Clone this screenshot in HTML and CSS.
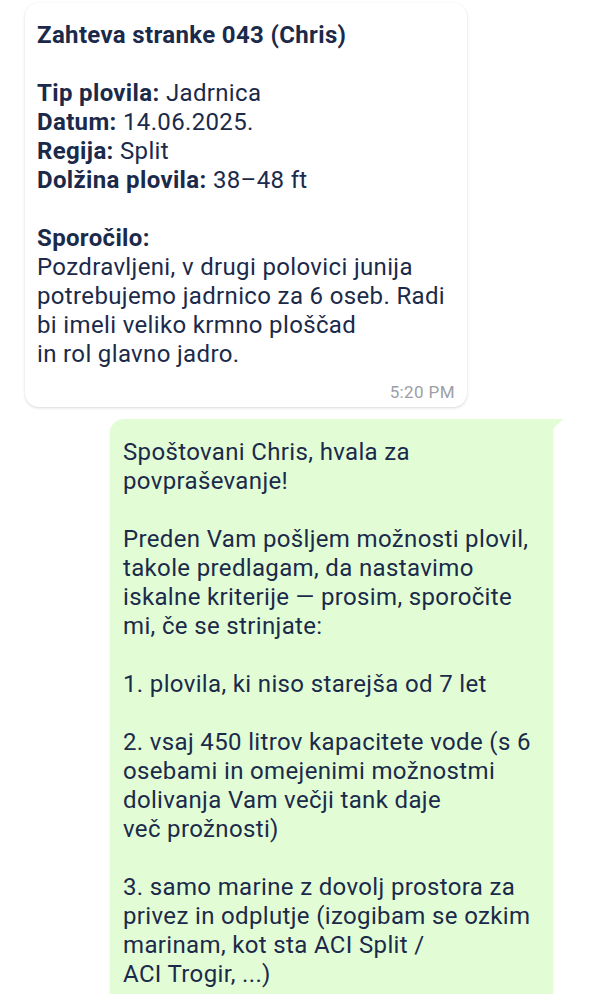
FILE: index.html
```html
<!DOCTYPE html>
<html lang="sl">
<head>
    <meta charset="UTF-8">
    <meta name="viewport" content="width=device-width, initial-scale=1.0">
    <title>Zahteva stranke 043</title>
    <link rel="stylesheet" href="styles.css">
</head>
<body>
    <div class="chat">
        <div class="bubble incoming">
            <p class="title">Zahteva stranke 043 (Chris)</p>
            <p>
                <b>Tip plovila:</b> Jadrnica<br>
                <b>Datum:</b> 14.06.2025.<br>
                <b>Regija:</b> Split<br>
                <b>Dolžina plovila:</b> 38–48 ft
            </p>
            <p class="last">
                <b>Sporočilo:</b><br>
                Pozdravljeni, v drugi polovici junija<br>
                potrebujemo jadrnico za 6 oseb. Radi<br>
                bi imeli veliko krmno ploščad<br>
                in rol glavno jadro.
            </p>
            <div class="time">5:20 PM</div>
        </div>

        <div class="bubble outgoing">
            <p>Spoštovani Chris, hvala za<br>povpraševanje!</p>
            <p>Preden Vam pošljem možnosti plovil,<br>
                takole predlagam, da nastavimo<br>
                iskalne kriterije — prosim, sporočite<br>
                mi, če se strinjate:</p>
            <p>1. plovila, ki niso starejša od 7 let</p>
            <p>2. vsaj 450 litrov kapacitete vode (s 6<br>
                osebami in omejenimi možnostmi<br>
                dolivanja Vam večji tank daje<br>
                več prožnosti)</p>
            <p>3. samo marine z dovolj prostora za<br>
                privez in odplutje (izogibam se ozkim<br>
                marinam, kot sta ACI Split /<br>
                ACI Trogir, ...)</p>
        </div>
    </div>
</body>
</html>
```

FILE: styles.css
```css
body {
    margin: 0;
    padding: 0;
    background-color: #ffffff;
    font-family: 'Roboto', 'Liberation Sans', sans-serif;
    color: #1b2a4a;
    overflow: hidden;
}
.chat {
    display: flex;
    flex-direction: column;
    padding: 3px 0 0 0;
}
.bubble {
    position: relative;
    box-sizing: border-box;
    font-size: 24px;
    line-height: 29px;
    letter-spacing: 0.35px;
}
.bubble p {
    margin: 0 0 29px 0;
}
.bubble b {
    font-weight: 700;
}
.incoming {
    align-self: flex-start;
    width: 442px;
    margin-left: 25px;
    padding: 18px 12px 5px 12px;
    background-color: #ffffff;
    border-radius: 14px;
    box-shadow: 0 1px 3px rgba(0, 0, 0, 0.16);
}
.incoming .title {
    font-weight: 700;
}
.incoming .last {
    margin-bottom: 0;
}
.time {
    text-align: right;
    font-size: 17px;
    line-height: 20px;
    letter-spacing: 0.4px;
    margin-top: 13px;
    color: #9ba0a6;
}
.outgoing {
    align-self: flex-end;
    width: 443px;
    margin: 12px 39px 0 0;
    padding: 19px 13px 0 13px;
    background-color: #e2fdd6;
    border-radius: 14px 0 14px 14px;
    box-shadow: 0 1px 2px rgba(0, 0, 0, 0.08);
}
.outgoing::after {
    content: "";
    position: absolute;
    top: 0;
    right: -10px;
    border-top: 10px solid #e2fdd6;
    border-right: 10px solid transparent;
}
```
